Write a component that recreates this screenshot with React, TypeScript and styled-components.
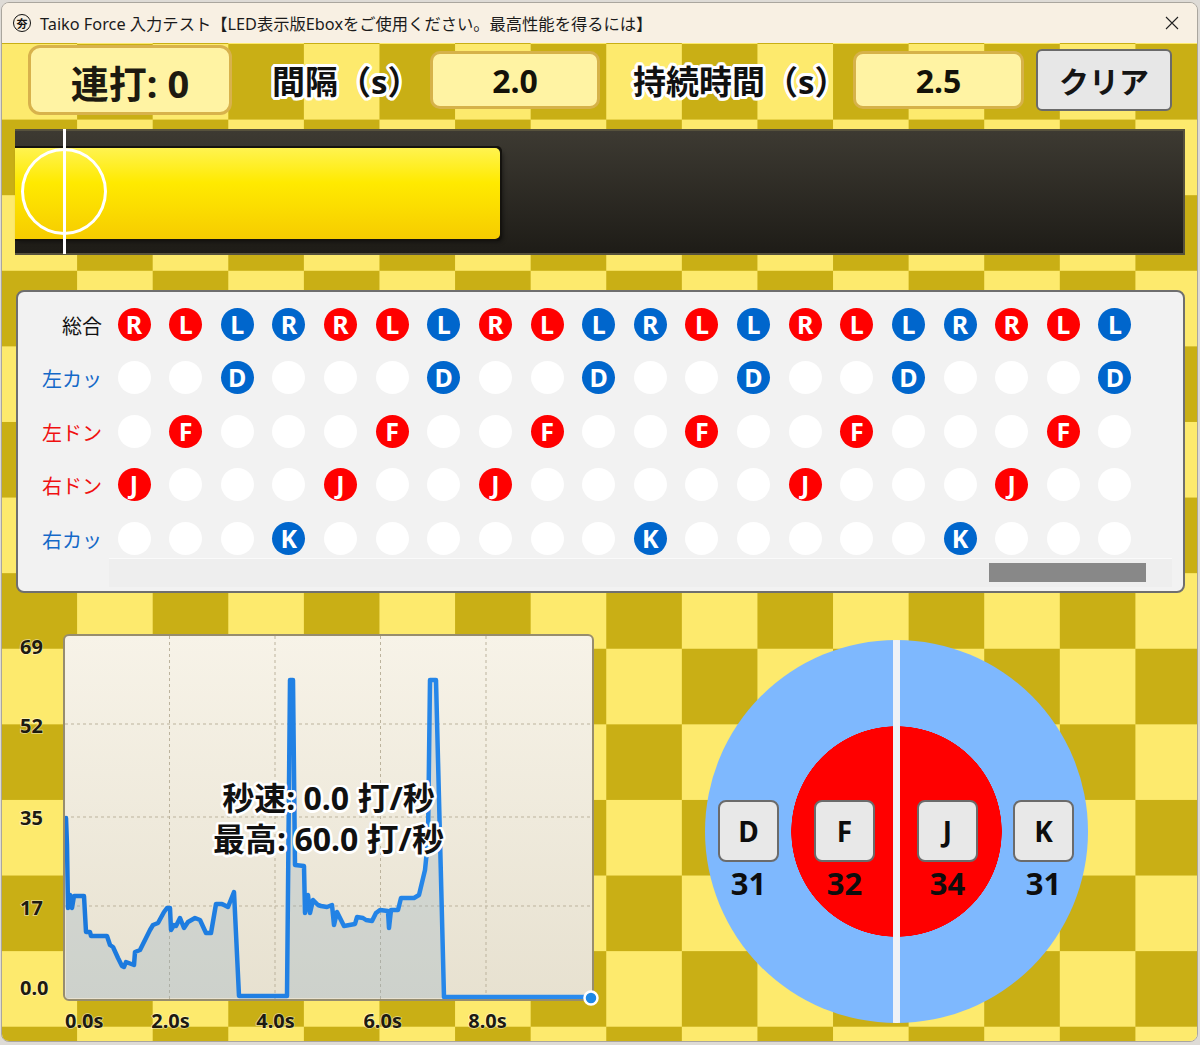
import React from "react";
import styled, { createGlobalStyle } from "styled-components";

const FONT = `"Noto Sans", "Noto Sans CJK JP", sans-serif`;
const LIGHT = "#FDEA6D";
const DARK = "#C9AF15";

const outline = (w: number, c: string) => {
  const parts: string[] = [];
  for (let i = 0; i < 16; i++) {
    const a = (i / 16) * Math.PI * 2;
    parts.push(`${(Math.cos(a) * w).toFixed(2)}px ${(Math.sin(a) * w).toFixed(2)}px 0 ${c}`);
  }
  return parts.join(", ");
};

const GlobalStyle = createGlobalStyle`
  html, body { margin: 0; padding: 0; }
  body { background: #dedbd6; font-family: ${FONT}; }
`;

const Window = styled.div`
  box-sizing: border-box;
  margin: 2px 0 0 1px;
  width: 1197px;
  height: 1040px;
  border: 1px solid #aaa69e;
  border-radius: 8px;
  overflow: hidden;
  display: flex;
  flex-direction: column;
  background: #f8f0e3;
`;

const TitleBar = styled.div`
  height: 40px;
  flex: none;
  display: flex;
  align-items: center;
  gap: 9px;
  padding-left: 11px;
  background: #f8f0e3;
  font-family: ${FONT};
  font-size: 16.3px;
  color: #1b1b1b;
`;

const AppIcon = styled.div`
  box-sizing: border-box;
  width: 18px;
  height: 18px;
  border: 1.6px solid #111;
  border-radius: 50%;
  display: flex;
  align-items: center;
  justify-content: center;
  font-family: "Noto Sans CJK JP", sans-serif;
  font-weight: 700;
  font-size: 11px;
  line-height: 1;
  color: #111;
`;

const Title = styled.div`
  flex: 1;
  white-space: nowrap;
`;

const CloseBox = styled.div`
  width: 46px;
  height: 40px;
  margin-right: 2px;
  display: flex;
  align-items: center;
  justify-content: center;
`;

const Content = styled.div`
  flex: 1;
  display: flex;
  flex-direction: column;
  background: repeating-conic-gradient(${DARK} 0 25%, ${LIGHT} 0 50%) -0.5px 1px / 151.2px 151.2px;
`;

const Header = styled.div`
  display: flex;
  align-items: center;
  height: 70px;
  margin-top: 2px;
  padding-left: 26px;
  font-family: ${FONT};
  font-weight: 700;
`;

const CounterBox = styled.div`
  box-sizing: border-box;
  width: 204px;
  height: 70px;
  background: #fff3a3;
  border: 3px solid #d8b24c;
  border-radius: 12px;
  display: flex;
  align-items: center;
  justify-content: center;
  font-size: 38px;
  color: #1d1a10;
  padding-top: 2px;
`;

const HeaderLabel = styled.div<{ $w: number; $pad: number }>`
  width: ${(p) => p.$w}px;
  padding-left: ${(p) => p.$pad}px;
  box-sizing: border-box;
  white-space: nowrap;
  font-size: 33px;
  color: #111;
  text-shadow: ${outline(3, "#fff")};
`;

const ValueBox = styled.div<{ $w: number }>`
  box-sizing: border-box;
  width: ${(p) => p.$w}px;
  height: 58px;
  background: #fff3a3;
  border: 3px solid #d6b24a;
  border-radius: 10px;
  display: flex;
  align-items: center;
  justify-content: center;
  font-size: 32px;
  color: #141208;
`;

const ClearButton = styled.button`
  box-sizing: border-box;
  margin-left: 12px;
  width: 136px;
  height: 62px;
  background: #e7e7e7;
  border: 2px solid #6a6a6a;
  border-radius: 6px;
  font-family: ${FONT};
  font-weight: 700;
  font-size: 30px;
  color: #151515;
  padding: 0;
`;

const Bar = styled.div`
  position: relative;
  box-sizing: border-box;
  margin: 14px 0 0 13px;
  width: 1170px;
  height: 126px;
  border: 2px solid #57523c;
  border-left: none;
  background: linear-gradient(#3d3a32, #1e1c17);
  display: flex;
  align-items: center;
`;

const Fill = styled.div`
  height: 91px;
  margin-top: 2px;
  border-radius: 0 5px 5px 0;
  background: linear-gradient(#fff350 0%, #ffea00 38%, #f6cc00 100%);
  box-shadow: 2px 0 0 #15130f, 0 2px 0 #15130f, 0 -2px 0 #15130f, 2px 2px 0 #15130f, 2px -2px 0 #15130f,
    3px 3px 4px rgba(0, 0, 0, 0.45);
`;

const MarkerRing = styled.div`
  position: absolute;
  left: 6px;
  top: 17px;
  width: 86px;
  height: 87px;
  box-sizing: border-box;
  border: 3px solid #fff;
  border-radius: 50%;
`;

const MarkerLine = styled.div`
  position: absolute;
  left: 48px;
  top: -2px;
  width: 3px;
  height: 125px;
  background: #fff;
`;

const Panel = styled.div`
  box-sizing: border-box;
  margin: 35px 0 0 14px;
  width: 1169px;
  height: 303px;
  background: #f2f2f2;
  border: 2px solid #6f6f6f;
  border-radius: 8px;
  padding-top: 15.5px;
  display: flex;
  flex-direction: column;
`;

const Rows = styled.div`
  display: flex;
  flex-direction: column;
  gap: 20.5px;
`;

const Row = styled.div`
  display: flex;
  align-items: center;
  height: 33px;
`;

const RowLabel = styled.div<{ $c: string }>`
  width: 84px;
  margin-right: 15.5px;
  text-align: right;
  font-family: "Noto Sans CJK JP", sans-serif;
  font-size: 20px;
  line-height: 1;
  color: ${(p) => p.$c};
  padding-top: 3px;
`;

const Dots = styled.div`
  display: flex;
  gap: 18.63px;
`;

const Dot = styled.div<{ $bg: string }>`
  width: 33px;
  height: 33px;
  border-radius: 50%;
  background: ${(p) => p.$bg};
  display: flex;
  align-items: center;
  justify-content: center;
  font-family: ${FONT};
  font-weight: 700;
  font-size: 25px;
  line-height: 1;
  color: #fff;
`;

const Track = styled.div`
  margin: 3.5px 0 0 91px;
  width: 1063px;
  height: 29px;
  box-sizing: border-box;
  background: #eeeeee;
  border-top: 1px solid #fafafa;
  display: flex;
`;

const Thumb = styled.div`
  margin: 4px 0 0 880px;
  width: 157px;
  height: 19px;
  background: #888;
`;

const Bottom = styled.div`
  flex: 1;
  display: flex;
`;

const ChartArea = styled.div`
  position: relative;
  flex: none;
  width: 598px;
  height: 448px;
`;

const ChartSvg = styled.svg`
  display: block;
`;

const StatsOverlay = styled.div`
  position: absolute;
  left: 62px;
  top: 42px;
  width: 529px;
  height: 365px;
  display: flex;
  flex-direction: column;
  align-items: center;
  justify-content: center;
  font-family: ${FONT};
  font-weight: 700;
  font-size: 32px;
  line-height: 41px;
  color: #111;
  text-shadow: ${outline(2.5, "#fff")};
  white-space: nowrap;
`;

const DrumArea = styled.div`
  flex: 1;
  padding: 46.5px 0 0 104.5px;
`;

const Drum = styled.div`
  box-sizing: border-box;
  width: 383px;
  height: 383px;
  border-radius: 50%;
  background:
    linear-gradient(90deg, transparent calc(50% - 3.5px), #eef2f7 calc(50% - 3.5px), #eef2f7 calc(50% + 3.5px), transparent calc(50% + 3.5px)),
    radial-gradient(circle, #ff0000 0 105px, #7eb8fe 105.5px);
  display: flex;
  justify-content: center;
  align-items: flex-start;
  gap: 42px;
  padding-top: 160.5px;
`;

const KeyGroup = styled.div`
  display: flex;
  gap: 35px;
`;

const KeyCell = styled.div`
  width: 61px;
  display: flex;
  flex-direction: column;
  align-items: center;
`;

const KeyCap = styled.div`
  box-sizing: border-box;
  width: 61px;
  height: 62px;
  background: #e8e8e8;
  border: 2px solid #6b6b6b;
  border-radius: 8px;
  display: flex;
  align-items: center;
  justify-content: center;
  font-family: ${FONT};
  font-weight: 700;
  font-size: 28px;
  color: #0d0d0d;
`;

const KeyCount = styled.div`
  margin-top: 2px;
  font-family: ${FONT};
  font-weight: 700;
  font-size: 31px;
  line-height: 38px;
  color: #0d0d0d;
`;

const RED = "#ff0000";
const BLUE = "#0066cc";

const keys = ["J", "F", "D", "K", "J", "F", "D", "J", "F", "D", "K", "F", "D", "J", "F", "D", "K", "J", "F", "D"];

const rows: { label: string; color: string; key: string | null }[] = [
  { label: "総合", color: "#111", key: null },
  { label: "左カッ", color: "#1469c8", key: "D" },
  { label: "左ドン", color: "#f01010", key: "F" },
  { label: "右ドン", color: "#f01010", key: "J" },
  { label: "右カッ", color: "#1469c8", key: "K" },
];

const keyColor = (k: string) => (k === "F" || k === "J" ? RED : BLUE);

const linePts: [number, number][] = [
  [66, 818], [67, 845], [68, 908], [70, 895], [72, 908], [74, 896], [84, 896], [86, 932], [90, 932], [91, 936],
  [107, 936], [110, 945], [113, 947], [118, 958], [122, 966], [124, 967], [126, 962], [134, 965], [135, 952],
  [140, 950], [145, 940], [150, 930], [153, 925], [158, 923], [164, 912], [167, 908], [170, 908], [171, 930],
  [174, 925], [176, 926], [180, 918], [184, 928], [188, 922], [195, 918], [200, 920], [206, 933], [211, 933],
  [216, 904], [222, 904], [228, 907], [234, 892], [239, 996], [287, 996], [290, 680], [293, 680], [295, 865],
  [304, 866], [305, 913], [308, 895], [310, 913], [313, 900], [318, 905], [321, 906], [327, 907], [332, 905],
  [334, 925], [337, 912], [344, 926], [355, 924], [357, 917], [363, 918], [366, 920], [372, 921], [376, 913],
  [380, 910], [388, 911], [389, 928], [391, 910], [398, 910], [401, 898], [414, 898], [419, 895], [425, 870],
  [428, 840], [430, 680], [436, 680], [444, 997], [591, 997],
];

const yLabels: [string, number][] = [["69", 647], ["52", 726], ["35", 818], ["17", 908], ["0.0", 988]];
const xLabels: [string, number, "start" | "middle"][] = [
  ["0.0s", 65, "start"], ["2.0s", 170.5, "middle"], ["4.0s", 275.5, "middle"], ["6.0s", 382.7, "middle"], ["8.0s", 487.6, "middle"],
];

function Chart() {
  const line = linePts.map((p) => p.join(",")).join(" ");
  const area = `${line} 591,998 66,998`;
  return (
    <ChartSvg width={598} height={448} viewBox="2 593 598 448">
      <defs>
        <linearGradient id="plotBg" x1="0" y1="0" x2="0" y2="1">
          <stop offset="0" stopColor="#f7f3e8" />
          <stop offset="1" stopColor="#e7e1d0" />
        </linearGradient>
        <linearGradient id="lineGrad" x1="0" y1="0" x2="1" y2="0">
          <stop offset="0" stopColor="#1a78dc" />
          <stop offset="1" stopColor="#2a8cee" />
        </linearGradient>
        <clipPath id="plotClip">
          <rect x={65} y={636} width={527} height={363} />
        </clipPath>
      </defs>
      <rect x={64} y={635} width={529} height={365} rx={5} fill="url(#plotBg)" stroke="#978d6e" strokeWidth={2} />
      <g stroke="#bcb39d" strokeWidth={1} strokeDasharray="3 3">
        {[169.5, 275, 380.5, 486].map((x) => (
          <line key={x} x1={x} y1={636} x2={x} y2={999} />
        ))}
        {[724, 817, 906].map((y) => (
          <line key={y} x1={65} y1={y} x2={592} y2={y} />
        ))}
      </g>
      <g clipPath="url(#plotClip)">
        <polygon points={area} fill="rgba(140,170,192,0.28)" />
        <polyline points={line} fill="none" stroke="url(#lineGrad)" strokeWidth={4.5} strokeLinejoin="round" strokeLinecap="round" />
      </g>
      <circle cx={591} cy={998} r={6.5} fill="#1e88e5" stroke="#fff" strokeWidth={2.5} />
      <g fontFamily={FONT} fontWeight={700} fontSize={20} fill="#1d1a10" stroke="rgba(255,255,255,0.55)" strokeWidth={1.5} paintOrder="stroke">
        {yLabels.map(([t, y]) => (
          <text key={t} x={20} y={y + 7}>{t}</text>
        ))}
        {xLabels.map(([t, x, a]) => (
          <text key={t} x={x} y={1027.5} textAnchor={a}>{t}</text>
        ))}
      </g>
    </ChartSvg>
  );
}

function CloseIcon() {
  return (
    <svg width="14" height="14" viewBox="0 0 14 14">
      <path d="M1 1 L13 13 M13 1 L1 13" stroke="#222" strokeWidth="1.1" fill="none" />
    </svg>
  );
}

export default function App() {
  return (
    <>
      <GlobalStyle />
      <Window>
        <TitleBar>
          <AppIcon>夯</AppIcon>
          <Title>Taiko Force 入力テスト【LED表示版Eboxをご使用ください。最高性能を得るには】</Title>
          <CloseBox>
            <CloseIcon />
          </CloseBox>
        </TitleBar>
        <Content>
          <Header>
            <CounterBox>連打: 0</CounterBox>
            <HeaderLabel $w={198} $pad={40}>間隔（s）</HeaderLabel>
            <ValueBox $w={170}>2.0</ValueBox>
            <HeaderLabel $w={253} $pad={33}>持続時間（s）</HeaderLabel>
            <ValueBox $w={171}>2.5</ValueBox>
            <ClearButton>クリア</ClearButton>
          </Header>
          <Bar>
            <Fill style={{ width: 485 }} />
            <MarkerRing />
            <MarkerLine />
          </Bar>
          <Panel>
            <Rows>
              {rows.map((r) => (
                <Row key={r.label}>
                  <RowLabel $c={r.color}>{r.label}</RowLabel>
                  <Dots>
                    {keys.map((k, i) => {
                      if (r.key === null) {
                        const letter = k === "J" || k === "K" ? "R" : "L";
                        return (
                          <Dot key={i} $bg={keyColor(k)}>
                            {letter}
                          </Dot>
                        );
                      }
                      const hit = k === r.key;
                      return (
                        <Dot key={i} $bg={hit ? keyColor(k) : "#ffffff"}>
                          {hit ? k : ""}
                        </Dot>
                      );
                    })}
                  </Dots>
                </Row>
              ))}
            </Rows>
            <Track>
              <Thumb />
            </Track>
          </Panel>
          <Bottom>
            <ChartArea>
              <Chart />
              <StatsOverlay>
                <div>秒速: 0.0 打/秒</div>
                <div>最高: 60.0 打/秒</div>
              </StatsOverlay>
            </ChartArea>
            <DrumArea>
              <Drum>
                <KeyGroup>
                  <KeyCell>
                    <KeyCap>D</KeyCap>
                    <KeyCount>31</KeyCount>
                  </KeyCell>
                  <KeyCell>
                    <KeyCap>F</KeyCap>
                    <KeyCount>32</KeyCount>
                  </KeyCell>
                </KeyGroup>
                <KeyGroup>
                  <KeyCell>
                    <KeyCap>J</KeyCap>
                    <KeyCount>34</KeyCount>
                  </KeyCell>
                  <KeyCell>
                    <KeyCap>K</KeyCap>
                    <KeyCount>31</KeyCount>
                  </KeyCell>
                </KeyGroup>
              </Drum>
            </DrumArea>
          </Bottom>
        </Content>
      </Window>
    </>
  );
}
